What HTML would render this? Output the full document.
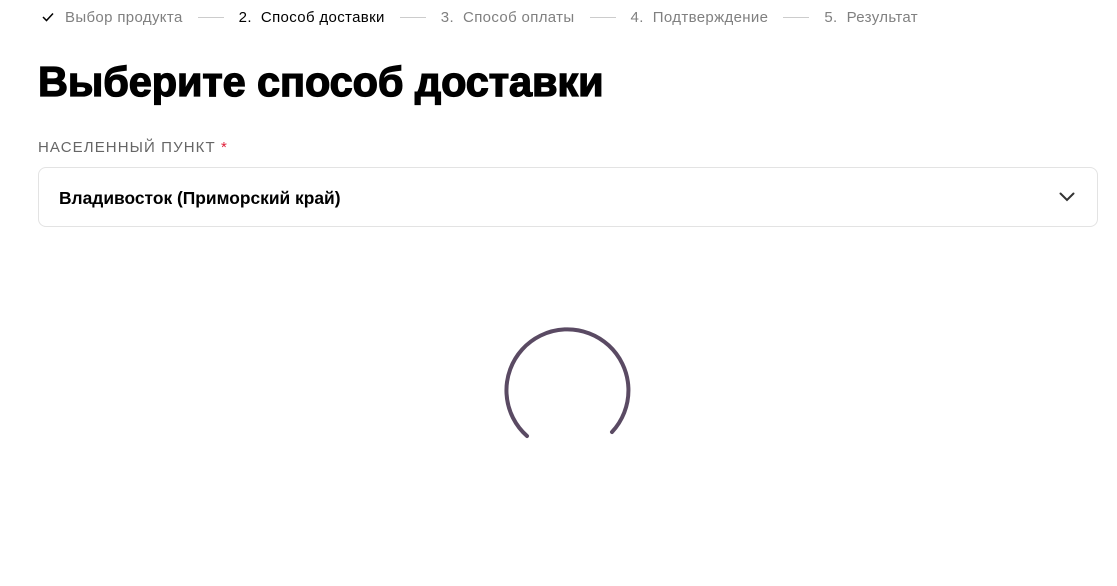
<!DOCTYPE html>
<html><head><meta charset="utf-8"><style>
body{margin:0;width:1117px;height:586px;background:#fff;font-family:"Liberation Sans",sans-serif;position:relative;overflow:hidden}
.steps{position:absolute;top:8px;left:42px;font-size:15px;letter-spacing:0.35px;color:#808080;white-space:nowrap;display:flex;align-items:center;height:18px}
.steps .ln{display:inline-block;width:26px;height:1px;background:#ccc;margin:0 15px}
.steps b{font-weight:normal;color:#000}
h1{position:absolute;left:38px;top:58px;margin:0;font-size:41.5px;font-weight:900;letter-spacing:-0.1px;color:#000;-webkit-text-stroke:1.3px #000}
.lbl{position:absolute;left:38px;top:139px;font-size:15px;letter-spacing:1.1px;color:#666}
.lbl span{color:#e0203a}
.sel{position:absolute;left:38px;top:167px;width:1060px;height:60px;border:1px solid #e3e3e3;border-radius:8px;box-sizing:border-box}
.sel .t{position:absolute;left:20px;top:20px;font-size:17.4px;font-weight:bold;color:#000}
</style></head><body>
<div class="steps"><svg width="12" height="10" viewBox="0 0 12 10"><path d="M1 5 L4.5 8.5 L11 1.5" stroke="#000" stroke-width="1.5" fill="none"/></svg><span style="margin-left:11px">Выбор продукта</span><span class="ln"></span><b>2.&nbsp; Способ доставки</b><span class="ln"></span>3.&nbsp; Способ оплаты<span class="ln"></span>4.&nbsp; Подтверждение<span class="ln"></span>5.&nbsp; Результат</div>
<h1>Выберите способ доставки</h1>
<div class="lbl">НАСЕЛЕННЫЙ ПУНКТ <span>*</span></div>
<div class="sel"><div class="t">Владивосток (Приморский край)</div>
<svg style="position:absolute;right:22px;top:24px" width="16" height="10" viewBox="0 0 16 10"><path d="M1.5 1.5 L8 8 L14.5 1.5" stroke="#333" stroke-width="2" fill="none" stroke-linecap="round"/></svg></div>
<svg style="position:absolute;left:0;top:0" width="1117" height="586"><path d="M527 436 A61 61 0 1 1 612 432" stroke="#5a4a63" stroke-width="4" fill="none" stroke-linecap="round"/></svg>
</body></html>
